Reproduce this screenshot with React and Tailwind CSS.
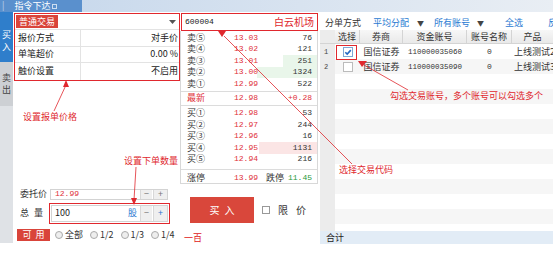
import React from "react";

const sell = [
  ["卖⑤", "13.03", "76", 0],
  ["卖④", "13.02", "121", 0],
  ["卖③", "13.01", "251", 34],
  ["卖②", "13.00", "1324", 60],
  ["卖①", "12.99", "522", 0],
];

const buy = [
  ["买①", "12.98", "53", 0],
  ["买②", "12.97", "244", 0],
  ["买③", "12.96", "16", 0],
  ["买④", "12.95", "1131", 58],
  ["买⑤", "12.94", "216", 0],
];

const accounts = [
  { no: 1, checked: true, broker: "国信证券", acct: "110000035060", name: "0", product: "上线测试2" },
  { no: 2, checked: false, broker: "国信证券", acct: "110000035090", name: "0", product: "上线测试3" },
];

const mono = "font-['Liberation_Mono',monospace]";

const BookRow = ({ row, side }) => {
  const [label, price, vol, bar] = row;
  return (
    <div className="relative h-[11.5px] flex items-center pl-[6px] pr-[5px]">
      {bar > 0 && (
        <div
          className={`absolute right-0 top-0 bottom-0 ${side === "sell" ? "bg-[#e9f6ea]" : "bg-[#fbe5e5]"}`}
          style={{ width: bar }}
        />
      )}
      <span className="relative w-[47px] text-[#333]">{label}</span>
      <span className={`relative text-[#e0303a] ${mono} text-[8px]`}>{price}</span>
      <span className={`relative ml-auto text-[#333] ${mono} text-[8px]`}>{vol}</span>
    </div>
  );
};

const Stepper = () => (
  <div className="ml-auto flex gap-[1px] h-full">
    <div className="w-[12px] h-full bg-[#efefef] border-l border-[#d8d8d8] flex items-center justify-center text-[#777] text-[9px]">−</div>
    <div className="w-[14px] h-full bg-[#efefef] border-l border-[#d8d8d8] flex items-center justify-center text-[#777] text-[9px]">+</div>
  </div>
);

const Radio = ({ label }) => (
  <div className="flex items-center gap-[2px]">
    <span className="w-[8px] h-[8px] rounded-full border border-[#aaa] bg-[#eee]" />
    <span>{label}</span>
  </div>
);

export default function App() {
  return (
    <div className="w-[553px] h-[253px] relative overflow-hidden bg-white flex flex-col font-['Noto_Sans_CJK_SC',sans-serif] text-[9px] leading-[10px] text-[#222]">
      {/* top title bar */}
      <div className="h-[12px] flex bg-gradient-to-r from-[#c4d6eb] to-[#e9eef4]">
        <div className="w-[82px] bg-[#5a90cd] flex items-center text-white">
          <span className="ml-[2px] opacity-60">|</span>
          <span className="ml-[10px]">指令下达</span>
          <span className="ml-[2px] w-[5px] h-[5px] border border-white/70" />
        </div>
      </div>

      <div className="flex flex-1 min-h-0">
        {/* vertical tabs */}
        <div className="w-[13px] flex flex-col">
          <div className="h-[50px] bg-[#2f7ecb] text-white text-[9px] flex flex-col items-center justify-center pt-[8px]">
            <span className="block h-[12px] leading-[12px]">买</span>
            <span className="block h-[12px] leading-[12px]">入</span>
          </div>
          <div className="h-[44px] bg-[#cdd0d4] text-[#444] text-[9px] flex flex-col items-center justify-center">
            <span className="block h-[12px] leading-[12px]">卖</span>
            <span className="block h-[12px] leading-[12px]">出</span>
          </div>
          <div className="flex-1 bg-[#dfe2e6]" />
          <div className="h-[10px] bg-white" />
        </div>

        {/* left order settings */}
        <div className="w-[167px] flex flex-col">
          <div className="ml-[1px] mt-[1px] w-[166px] border border-[#e0282e] flex flex-col">
            <div className="h-[16px] flex items-center justify-between border-b border-[#e3e3e3] pr-[3px]">
              <span className="ml-[1px] h-[13px] px-[3px] bg-[#d9443a] text-white flex items-center">普通交易</span>
              <svg width="7" height="4" viewBox="0 0 7 4">
                <path d="M0 0h7L3.5 4z" fill="#555" />
              </svg>
            </div>
            {[
              ["报价方式", "对手价"],
              ["单笔超价", "0.00 %"],
              ["触价设置", "不启用"],
            ].map(([k, v], i) => (
              <div key={k} className={`h-[16.5px] flex ${i < 2 ? "border-b border-[#e3e3e3]" : ""}`}>
                <span className="w-[66px] border-r border-[#e3e3e3] flex items-center pl-[3px]">{k}</span>
                <span className="flex-1 flex items-center justify-end pr-[1px]">{v}</span>
              </div>
            ))}
          </div>

          <div className="mt-[108px] flex items-center h-[11px]">
            <span className="w-[37px] pl-[7px] text-[#333]">委托价</span>
            <div className="w-[118px] h-[11px] border border-[#d3d3d3] flex items-center">
              <span className={`pl-[4px] text-[#e0303a] ${mono} text-[8px]`}>12.99</span>
              <Stepper />
            </div>
          </div>

          <div className="mt-[3px] flex items-center h-[21px]">
            <span className="w-[36px] pl-[7px] text-[#333] tracking-[5px]">总量</span>
            <div className="w-[121px] h-[21px] border-[1.5px] border-[#e0282e] p-[1px] flex">
              <div className="flex-1 border border-[#d3d3d3] flex items-center">
                <span className="pl-[3px] text-[#222]">100</span>
                <span className="ml-auto mr-[3px] text-[#2a77cf]">股</span>
                <div className="flex gap-[1px] h-full">
                  <div className="w-[12px] h-full bg-[#efefef] border-l border-[#d8d8d8] flex items-center justify-center text-[#777]">−</div>
                  <div className="w-[14px] h-full bg-[#efefef] border-l border-[#d8d8d8] flex items-center justify-center text-[#2a77cf]">+</div>
                </div>
              </div>
            </div>
          </div>

          <div className="mt-[5px] flex items-center h-[12px] gap-[5px]">
            <span className="ml-[4px] w-[33px] h-[12px] bg-[#d9443a] text-white flex items-center justify-center tracking-[4px] pl-[4px]">可用</span>
            <div className="flex items-center gap-[7px] text-[#333]">
              <Radio label="全部" />
              <Radio label="1/2" />
              <Radio label="1/3" />
              <Radio label="1/4" />
            </div>
          </div>
        </div>

        {/* middle: code + order book */}
        <div className="w-[140px] flex flex-col">
          <div className="ml-[1px] mt-[1px] w-[137px] h-[18px] border border-[#e0282e] flex items-center justify-between px-[3px]">
            <span className={`${mono} text-[8px]`}>600004</span>
            <span className="text-[#e0282e] text-[10px]">白云机场</span>
          </div>
          <div className="w-[138px] border-x border-b border-[#d8d8d8] flex flex-col pt-[1px]">
            {sell.map((r) => (
              <BookRow key={r[0]} row={r} side="sell" />
            ))}
            <div className="h-[1px] bg-[#dcdcdc] mt-[1px]" />
            <div className="h-[13px] flex items-center pl-[6px] pr-[5px]">
              <span className="w-[47px] text-[#e0303a]">最新</span>
              <span className={`text-[#e0303a] ${mono} text-[8px]`}>12.98</span>
              <span className={`ml-auto text-[#e0303a] ${mono} text-[8px]`}>+0.28</span>
            </div>
            <div className="h-[1px] bg-[#dcdcdc] mb-[2px]" />
            {buy.map((r) => (
              <BookRow key={r[0]} row={r} side="buy" />
            ))}
            <div className="h-[1px] bg-[#dcdcdc] mt-[4px]" />
            <div className="h-[13px] flex items-center pl-[6px] pr-[5px] pt-[2px]">
              <span className="w-[47px] text-[#333]">涨停</span>
              <span className={`text-[#e0303a] ${mono} text-[8px]`}>13.99</span>
              <span className="ml-[8px] text-[#333]">跌停</span>
              <span className={`ml-auto text-[#1f9a3c] ${mono} text-[8px]`}>11.45</span>
            </div>
          </div>

          <div className="mt-[13px] flex items-center">
            <div className="ml-[10px] w-[64px] h-[26px] bg-[#d9473b] text-white text-[10px] flex items-center justify-center tracking-[5px] pl-[5px]">
              买入
            </div>
            <span className="ml-[8px] w-[8px] h-[8px] border border-[#999] bg-white" />
            <span className="ml-[8px] text-[10px] text-[#333] tracking-[8px]">限价</span>
          </div>
          <div className="mt-[10px] ml-[4px] text-[#e02020]">一百</div>
        </div>

        {/* right: accounts */}
        <div className="flex-1 flex flex-col min-w-0">
          <div className="h-[18px] flex items-center pt-[3px] pl-[5px] whitespace-nowrap">
            <span className="text-[#333]">分单方式</span>
            <span className="ml-[12px] text-[#2a7ad2]">平均分配</span>
            <span className="ml-[8px] text-[#444] text-[7px]">▼</span>
            <span className="ml-[10px] text-[#2a7ad2]">所有账号</span>
            <span className="ml-[7px] text-[#444] text-[7px]">▼</span>
            <span className="ml-[9px] w-[1px] h-[11px] bg-[#d5d5d5]" />
            <span className="ml-[12px] text-[#2a7ad2]">全选</span>
            <span className="ml-[25px] text-[#2a7ad2]">反选</span>
          </div>

          <div className="h-[14px] grid grid-cols-[15px_25px_43px_64px_45px_1fr] bg-gradient-to-b from-[#f7f7f7] to-[#e9e9e9] border-b border-[#d4d4d4] text-[#333] whitespace-nowrap">
            <span className="bg-[#ececec]" />
            <span className="flex items-center justify-center border-r border-[#d4d4d4]">选择</span>
            <span className="flex items-center justify-center border-r border-[#d4d4d4]">券商</span>
            <span className="flex items-center justify-center border-r border-[#d4d4d4]">资金账号</span>
            <span className="flex items-center justify-center border-r border-[#d4d4d4]">账号名称</span>
            <span className="flex items-center justify-center">产品</span>
          </div>

          {accounts.map((a, i) => (
            <div
              key={a.no}
              className={`h-[15px] grid grid-cols-[15px_25px_43px_64px_45px_1fr] whitespace-nowrap ${i % 2 ? "bg-[#f6f6f6]" : "bg-white"}`}
            >
              <span className={`bg-[#ececec] flex items-center pl-[4px] text-[#444] ${mono} text-[7px]`}>{a.no}</span>
              <span className="flex items-center justify-center">
                {a.checked ? (
                  <svg width="10" height="10" viewBox="0 0 10 10">
                    <rect x="0.5" y="0.5" width="9" height="9" fill="#fff" stroke="#7ea7d6" />
                    <path d="M2.3 5.2l1.9 1.9 3.6-4" fill="none" stroke="#2569c3" strokeWidth="1.6" />
                  </svg>
                ) : (
                  <span className="w-[10px] h-[10px] border border-[#bbb] bg-white" />
                )}
              </span>
              <span className="flex items-center justify-center text-[#333]">{a.broker}</span>
              <span className={`flex items-center justify-center text-[#333] ${mono} text-[7.5px]`}>{a.acct}</span>
              <span className={`flex items-center justify-center text-[#333] ${mono} text-[8px]`}>{a.name}</span>
              <span className="flex items-center pl-[2px] text-[#333] overflow-hidden">{a.product}</span>
            </div>
          ))}

          <div className="flex-1 flex flex-col overflow-hidden">
            {Array.from({ length: 11 }).map((_, i) => (
              <div key={i} className={`h-[15px] shrink-0 flex ${i % 2 ? "bg-[#f6f6f6]" : "bg-white"}`}>
                <span className="w-[15px] bg-[#ececec]" />
              </div>
            ))}
          </div>

          <div className="h-[13px] bg-[#e2ecf6] flex items-center pl-[6px] text-[#222]">合计</div>
          <div className="h-[9px] bg-white" />
        </div>
      </div>

      {/* annotations */}
      <div className="absolute left-[336px] top-[45px] w-[21px] h-[15px] border-[1.5px] border-[#e0282e]" />
      <svg className="absolute inset-0 pointer-events-none" width="553" height="253" viewBox="0 0 553 253">
        <g stroke="#e0282e" strokeWidth="0.8" fill="none">
          <line x1="66" y1="85" x2="54" y2="111" />
          <line x1="136" y1="167" x2="134" y2="200" />
          <line x1="224" y1="36" x2="352" y2="164" />
          <line x1="364" y1="65" x2="408" y2="90" />
        </g>
        <g fill="#e0282e">
          <polygon points="66,80 63,87 69,87" />
          <polygon points="134,205 131,198 137,198" />
          <polygon points="218,31 226,31 222,37" />
          <polygon points="358,61 367,61 362,67" />
        </g>
      </svg>
      <span className="absolute left-[23px] top-[112px] text-[#e0282e]">设置报单价格</span>
      <span className="absolute left-[124px] top-[156px] text-[#e0282e]">设置下单数量</span>
      <span className="absolute left-[339px] top-[165px] text-[#e0282e]">选择交易代码</span>
      <span className="absolute left-[390px] top-[91px] text-[#e0282e] whitespace-nowrap">勾选交易账号，多个账号可以勾选多个</span>
    </div>
  );
}
